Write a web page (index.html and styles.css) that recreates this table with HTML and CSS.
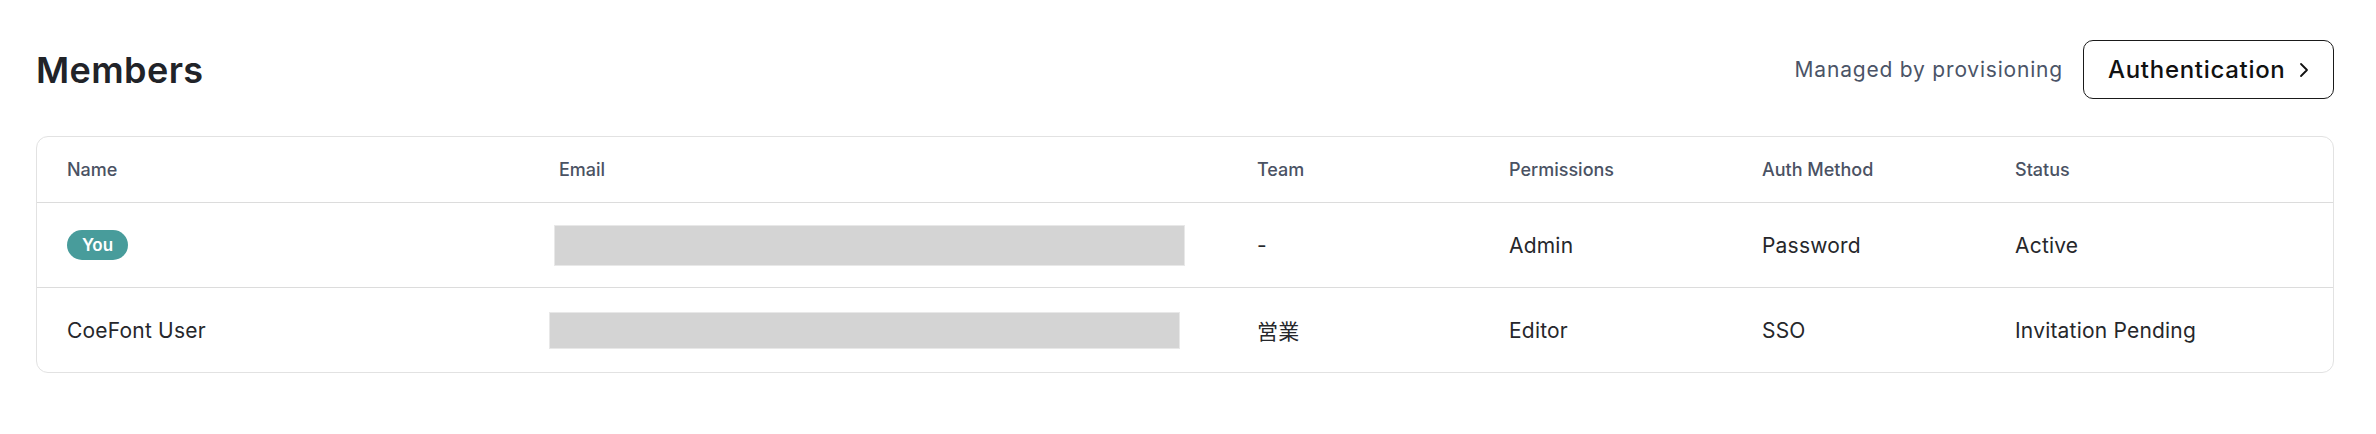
FILE: index.html
```html
<!DOCTYPE html>
<html lang="en">
<head>
    <meta charset="UTF-8">
    <meta name="viewport" content="width=device-width, initial-scale=1.0">
    <title>Members</title>
    <link rel="stylesheet" href="styles.css">
</head>
<body>
    <main class="page">
        <header class="page-head">
            <h1>Members</h1>
            <div class="head-actions">
                <span class="managed">Managed by provisioning</span>
                <button class="auth-btn">
                    Authentication
                    <svg class="chevron" viewBox="0 0 12 18" width="12" height="18" aria-hidden="true">
                        <path d="M3 3 L9 9 L3 15" fill="none" stroke="currentColor" stroke-width="1.8" stroke-linecap="round" stroke-linejoin="round"/>
                    </svg>
                </button>
            </div>
        </header>

        <div class="card">
            <table class="members">
                <colgroup>
                    <col class="col-name">
                    <col class="col-email">
                    <col class="col-team">
                    <col class="col-perm">
                    <col class="col-auth">
                    <col>
                </colgroup>
                <thead>
                    <tr>
                        <th>Name</th>
                        <th>Email</th>
                        <th>Team</th>
                        <th>Permissions</th>
                        <th>Auth Method</th>
                        <th>Status</th>
                    </tr>
                </thead>
                <tbody>
                    <tr>
                        <td><span class="badge">You</span></td>
                        <td><div class="redact redact-first"></div></td>
                        <td>-</td>
                        <td>Admin</td>
                        <td>Password</td>
                        <td>Active</td>
                    </tr>
                    <tr>
                        <td>CoeFont User</td>
                        <td><div class="redact redact-second"></div></td>
                        <td class="cjk">営業</td>
                        <td>Editor</td>
                        <td>SSO</td>
                        <td>Invitation Pending</td>
                    </tr>
                </tbody>
            </table>
        </div>
    </main>
</body>
</html>
```

FILE: styles.css
```css
/* Base */
body {
    margin: 0;
    background: #fff;
    font-family: Inter, "Noto Sans", sans-serif;
    color: #26272b;
}

.page {
    padding: 40px 42px 0 36px;
}

/* Header */
.page-head {
    display: flex;
    justify-content: space-between;
    align-items: center;
    height: 59px;
    margin-bottom: 37px;
}

.page-head h1 {
    margin: 0;
    font-size: 36px;
    font-weight: 600;
    letter-spacing: 0.4px;
    color: #212328;
}

.head-actions {
    display: flex;
    align-items: center;
    gap: 20px;
}

.managed {
    font-size: 21px;
    letter-spacing: 0.8px;
    color: #4b5467;
}

.auth-btn {
    display: flex;
    align-items: center;
    gap: 12px;
    height: 59px;
    width: 251px;
    padding: 0 24px;
    box-sizing: border-box;
    background: #fff;
    border: 1.5px solid #1a1a1a;
    border-radius: 10px;
    font-family: inherit;
    font-size: 24px;
    font-weight: 500;
    letter-spacing: 0.7px;
    color: #111;
    cursor: pointer;
}

.chevron {
    flex: none;
}

/* Table card */
.card {
    border: 1px solid #e2e2e2;
    border-radius: 12px;
    overflow: hidden;
}

.members {
    width: 100%;
    border-collapse: collapse;
    table-layout: fixed;
}

.col-name { width: 492px; }
.col-email { width: 698px; }
.col-team { width: 252px; }
.col-perm { width: 253px; }
.col-auth { width: 253px; }

.members th,
.members td {
    padding: 0 0 0 30px;
    text-align: left;
    white-space: nowrap;
}

.members th {
    height: 65px;
    font-size: 18px;
    font-weight: 500;
    color: #4a5263;
}

.members td {
    height: 84px;
    font-size: 21px;
    letter-spacing: 0.2px;
    color: #26272b;
}

.members tr {
    border-bottom: 1px solid #dcdcdc;
}

.members tbody tr:last-child {
    border-bottom: none;
}

.cjk {
    font-family: "Noto Sans CJK JP", sans-serif;
}

.badge {
    display: inline-block;
    width: 61px;
    height: 30px;
    line-height: 30px;
    border-radius: 15px;
    background: #489c9b;
    color: #fff;
    font-size: 17px;
    font-weight: 600;
    letter-spacing: 0;
    text-align: center;
}

/* Redacted email cells */
.redact {
    width: 629px;
    background: #d4d4d4;
    box-shadow: 0 0 0 1px #e8e8e8;
}

.redact-first {
    height: 39px;
    margin-left: -4px;
}

.redact-second {
    height: 35px;
    margin-left: -9px;
}
```
